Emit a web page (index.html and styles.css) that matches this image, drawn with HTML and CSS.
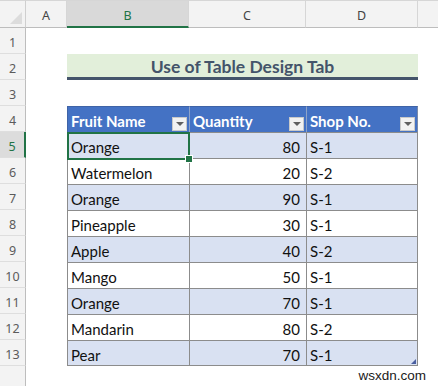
FILE: index.html
```html
<!DOCTYPE html>
<html>
<head>
<meta charset="utf-8">
<link rel="stylesheet" href="styles.css">
</head>
<body>
<div class="sheet">
  <div class="corner"></div>
  <div class="ch">A</div>
  <div class="ch sel">B</div>
  <div class="ch">C</div>
  <div class="ch">D</div>
  <div class="ch last"></div>

  <div class="rn">1</div><div class="blank"></div>

  <div class="rn">2</div><div class="e"></div>
  <div class="title">Use of Table Design Tab</div>
  <div class="e"></div>

  <div class="rn">3</div><div class="blank"></div>

  <div class="rn">4</div><div class="e"></div>
  <div class="th first"><span>Fruit Name</span><i class="flt"></i></div>
  <div class="th"><span>Quantity</span><i class="flt"></i></div>
  <div class="th rt"><span>Shop No.</span><i class="flt"></i></div>
  <div class="e"></div>

  <div class="rn rsel">5</div><div class="e"></div>
  <div class="td first band active">Orange</div><div class="td num band">80</div><div class="td rt band">S-1</div><div class="e"></div>

  <div class="rn">6</div><div class="e"></div>
  <div class="td first">Watermelon</div><div class="td num">20</div><div class="td rt">S-2</div><div class="e"></div>

  <div class="rn">7</div><div class="e"></div>
  <div class="td first band">Orange</div><div class="td num band">90</div><div class="td rt band">S-1</div><div class="e"></div>

  <div class="rn">8</div><div class="e"></div>
  <div class="td first">Pineapple</div><div class="td num">30</div><div class="td rt">S-1</div><div class="e"></div>

  <div class="rn">9</div><div class="e"></div>
  <div class="td first band">Apple</div><div class="td num band">40</div><div class="td rt band">S-2</div><div class="e"></div>

  <div class="rn">10</div><div class="e"></div>
  <div class="td first">Mango</div><div class="td num">50</div><div class="td rt">S-1</div><div class="e"></div>

  <div class="rn">11</div><div class="e"></div>
  <div class="td first band">Orange</div><div class="td num band">70</div><div class="td rt band">S-1</div><div class="e"></div>

  <div class="rn">12</div><div class="e"></div>
  <div class="td first">Mandarin</div><div class="td num">80</div><div class="td rt">S-2</div><div class="e"></div>

  <div class="rn">13</div><div class="e"></div>
  <div class="td first band bottom">Pear</div><div class="td num band bottom">70</div><div class="td rt band bottom resize">S-1</div><div class="e"></div>

  <div class="rn end"></div><div class="blank"></div>

  <div class="watermark">wsxdn.com</div>
</div>
</body>
</html>
```

FILE: styles.css
```css
* { box-sizing: border-box; }
html, body { margin: 0; padding: 0; background: #ffffff; }
body { width: 438px; height: 386px; overflow: hidden; }

.sheet {
  position: relative;
  display: grid;
  grid-template-columns: 26px 41px 122px 117px 112px 1fr;
  grid-template-rows: 28px repeat(13, 26px) 1fr;
  height: 386px;
  font-family: Lato, "Liberation Sans", sans-serif;
}

.corner {
  position: relative;
  background: #f3f3f3;
  border-top: 1px solid #d6d6d6;
  border-right: 1px solid #cfcfcf;
  border-bottom: 1px solid #bdbdbd;
}
.corner::after {
  content: "";
  position: absolute;
  right: 3px;
  bottom: 3px;
  width: 0;
  height: 0;
  border-left: 12px solid transparent;
  border-bottom: 12px solid #dcdcdc;
}

.ch {
  background: #f3f3f3;
  border-top: 1px solid #d6d6d6;
  border-right: 1px solid #d6d6d6;
  border-bottom: 1px solid #bdbdbd;
  display: flex;
  align-items: center;
  justify-content: center;
  padding-top: 3px;
  font-family: "Noto Sans", sans-serif;
  font-size: 12.5px;
  color: #444;
}
.ch.sel {
  background: #d9d9d9;
  border-bottom: 2px solid #217346;
  color: #217346;
}
.ch.last { border-right: none; }

.rn {
  background: #f3f3f3;
  border-right: 1px solid #bdbdbd;
  border-bottom: 1px solid #dedede;
  display: flex;
  align-items: center;
  justify-content: center;
  padding-top: 3px;
  font-family: "Noto Sans", sans-serif;
  font-size: 12.5px;
  color: #5b5b5b;
}
.rn.rsel {
  background: #dcdcdc;
  border-right: 2px solid #217346;
  color: #217346;
}
.rn.end { border-bottom: none; }

.blank { grid-column: 2 / -1; }

.title {
  grid-column: 3 / 6;
  background: #e2efda;
  border-bottom: 3px solid #44546a;
  color: #44546a;
  font-weight: bold;
  font-size: 17.5px;
  display: flex;
  align-items: center;
  justify-content: center;
  padding-top: 1px;
}

.th {
  background: #4472c4;
  color: #ffffff;
  font-weight: bold;
  font-size: 15px;
  border-top: 1px solid #3f63a6;
  border-left: 1px solid #8ea3c8;
  display: flex;
  align-items: center;
  justify-content: space-between;
  padding: 2px 2px 0 3px;
}
.th.first { border-left: 1px solid #3f63a6; }
.th.rt { border-right: 1px solid #7a8aa8; }

.flt {
  width: 15px;
  height: 14px;
  margin-top: 6px;
  background: #f2f2f2;
  border: 1px solid #c9c9c9;
  position: relative;
  flex: none;
}
.flt::after {
  content: "";
  position: absolute;
  left: 3px;
  top: 4px;
  border-left: 4px solid transparent;
  border-right: 4px solid transparent;
  border-top: 4px solid #606060;
}

.td {
  border-top: 1px solid #8c8c8c;
  border-left: 1px solid #8c8c8c;
  font-size: 15px;
  color: #111;
  display: flex;
  align-items: center;
  padding: 3px 4px 0 3px;
}
.td.band { background: #d9e1f2; }
.td.num { justify-content: flex-end; padding-right: 6px; }
.td.rt { border-right: 1px solid #8c8c8c; }
.td.bottom { border-bottom: 1px solid #8c8c8c; }

.active { position: relative; }
.active::before {
  content: "";
  position: absolute;
  left: -1px;
  top: -1px;
  right: -1px;
  bottom: -2px;
  border: 2px solid #217346;
}
.active::after {
  content: "";
  position: absolute;
  right: -4px;
  bottom: -5px;
  width: 6px;
  height: 6px;
  background: #217346;
  border: 1px solid #ffffff;
}

.resize { position: relative; }
.resize::after {
  content: "";
  position: absolute;
  right: 1px;
  bottom: 1px;
  border-left: 5px solid transparent;
  border-bottom: 5px solid #4a5fa0;
}

.watermark {
  position: absolute;
  right: 12px;
  bottom: 3px;
  font-family: "Liberation Sans", Arial, sans-serif;
  font-size: 13.5px;
  color: #1a1a1a;
}
```
